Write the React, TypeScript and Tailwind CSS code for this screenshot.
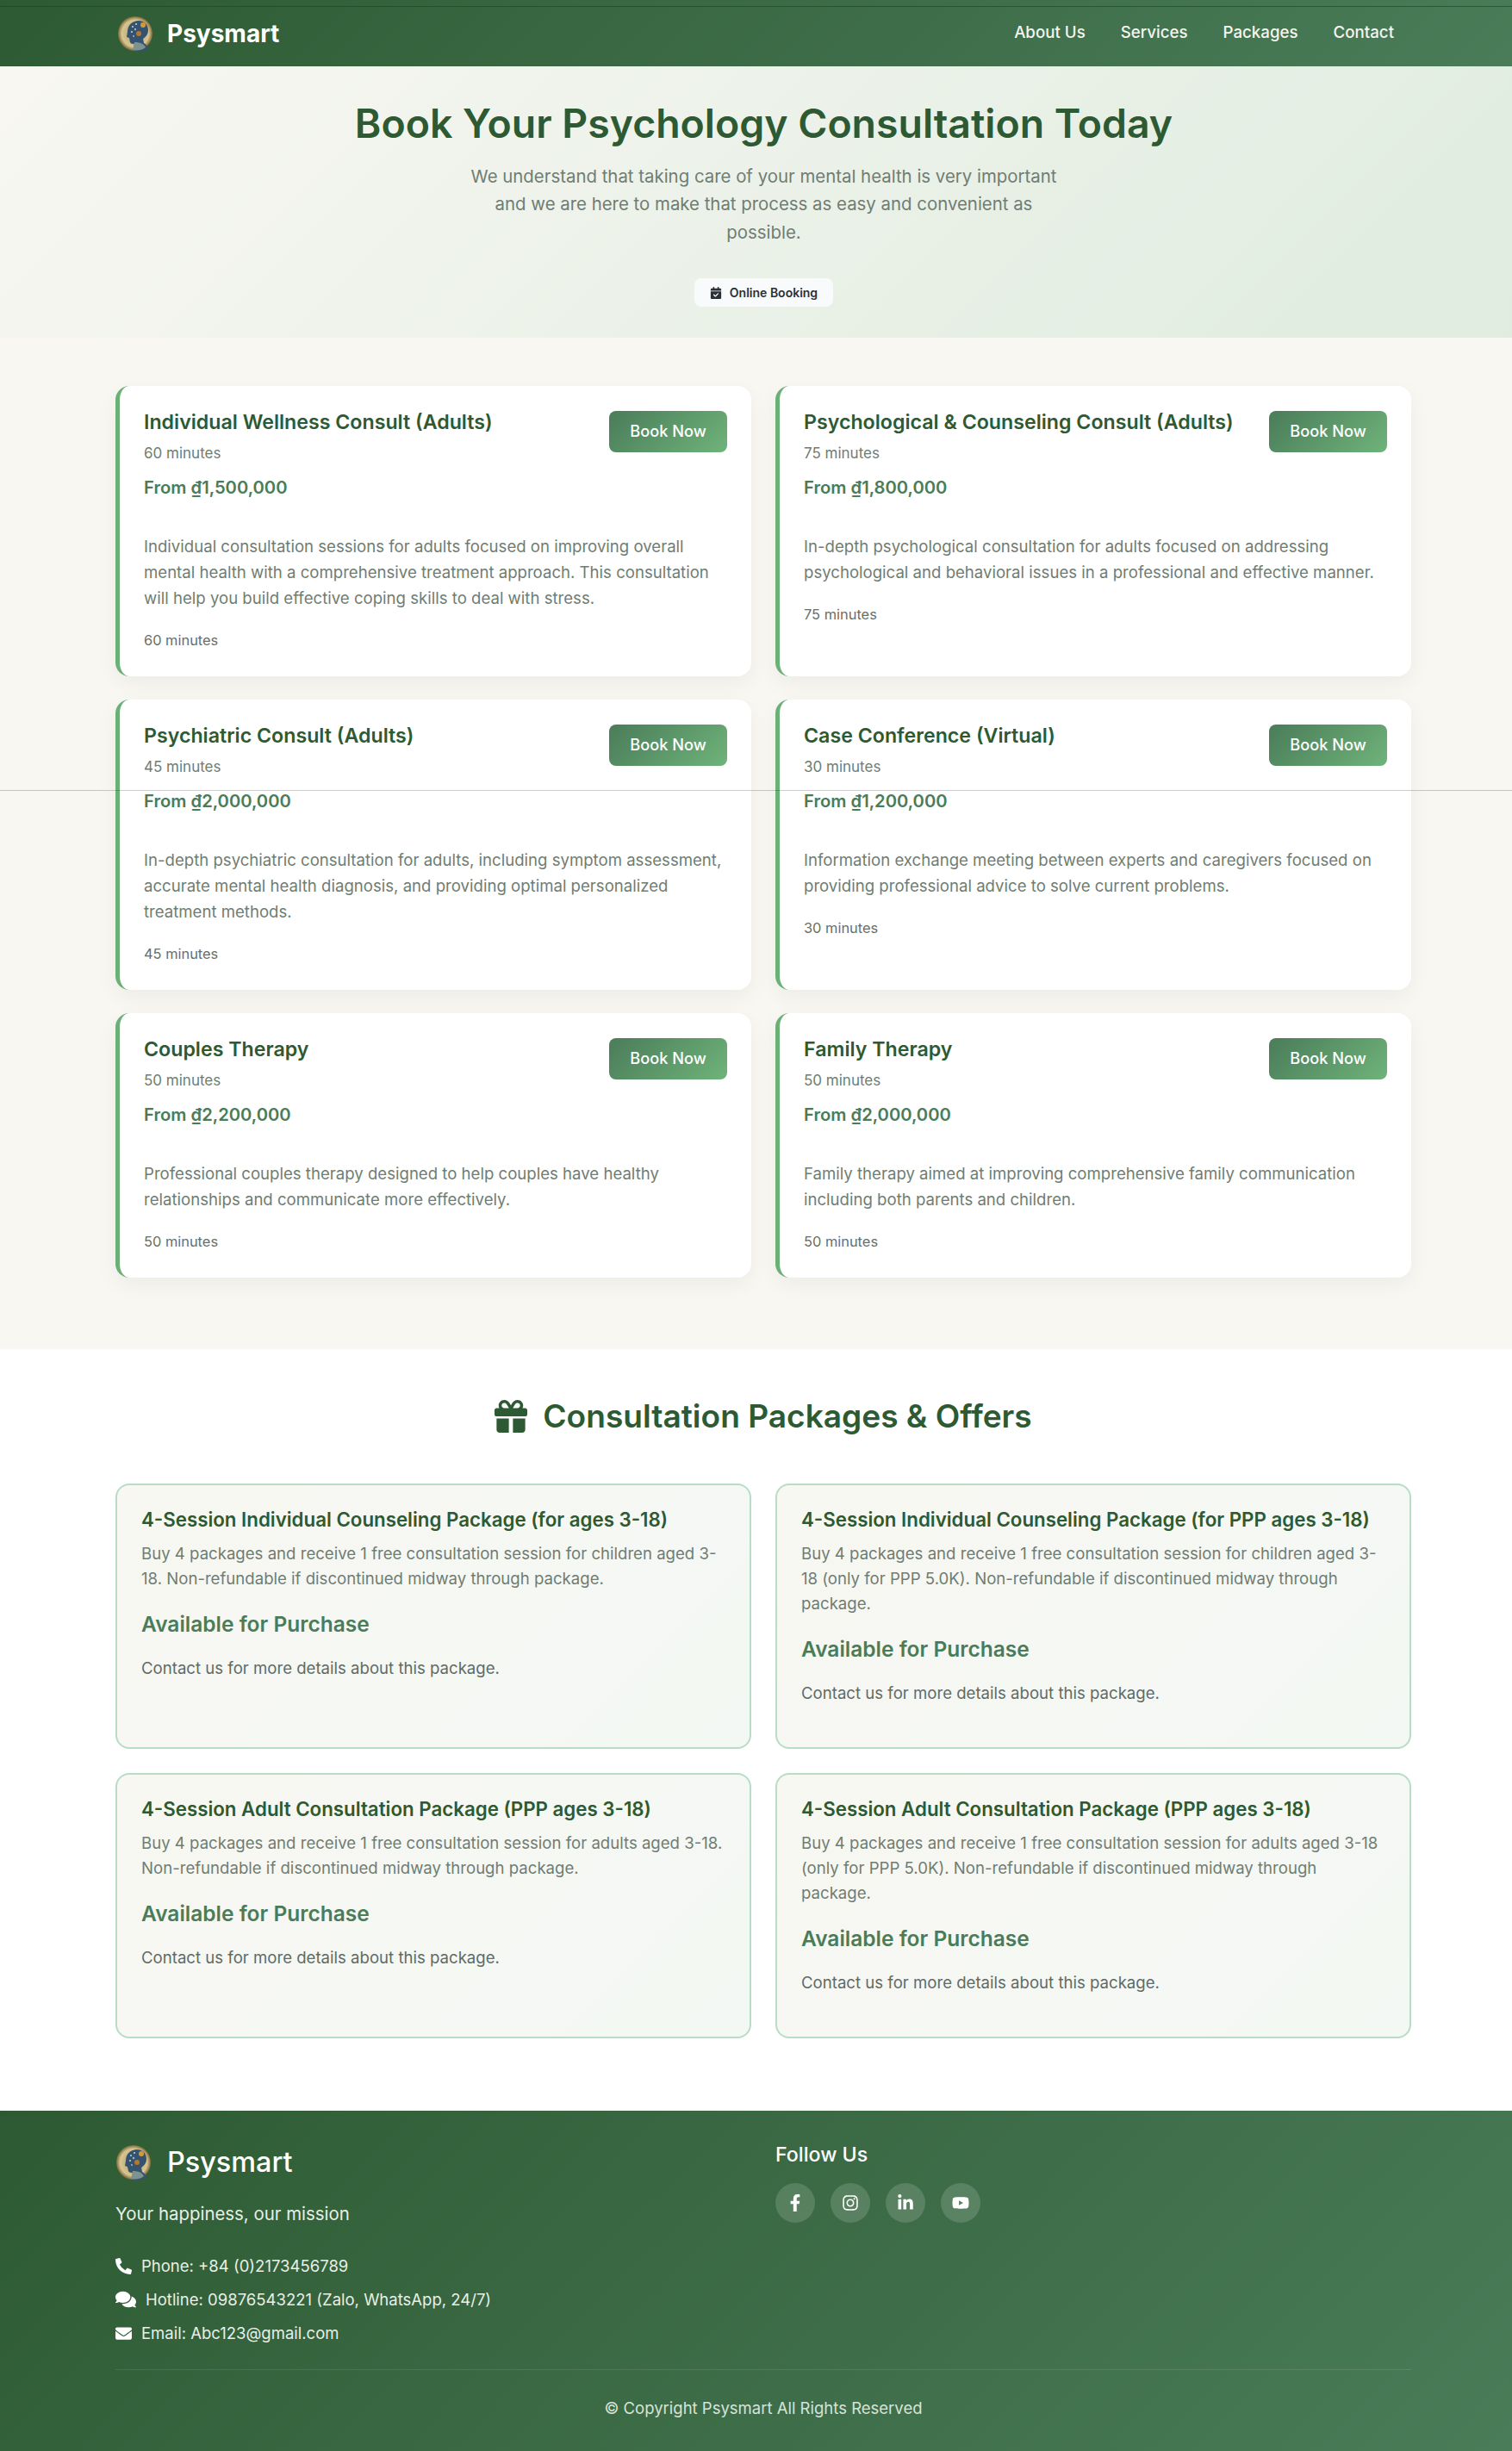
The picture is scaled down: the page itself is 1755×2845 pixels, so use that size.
import { FaComments, FaEnvelope, FaFacebookF, FaInstagram, FaLinkedinIn, FaPhoneAlt, FaYoutube } from "react-icons/fa";
import { FaCalendarCheck, FaGift } from "react-icons/fa6";

const services = [
  {
    title: "Individual Wellness Consult (Adults)",
    minutes: "60 minutes",
    price: "From ₫1,500,000",
    desc: "Individual consultation sessions for adults focused on improving overall mental health with a comprehensive treatment approach. This consultation will help you build effective coping skills to deal with stress.",
  },
  {
    title: "Psychological & Counseling Consult (Adults)",
    minutes: "75 minutes",
    price: "From ₫1,800,000",
    desc: "In-depth psychological consultation for adults focused on addressing psychological and behavioral issues in a professional and effective manner.",
  },
  {
    title: "Psychiatric Consult (Adults)",
    minutes: "45 minutes",
    price: "From ₫2,000,000",
    desc: "In-depth psychiatric consultation for adults, including symptom assessment, accurate mental health diagnosis, and providing optimal personalized treatment methods.",
  },
  {
    title: "Case Conference (Virtual)",
    minutes: "30 minutes",
    price: "From ₫1,200,000",
    desc: "Information exchange meeting between experts and caregivers focused on providing professional advice to solve current problems.",
  },
  {
    title: "Couples Therapy",
    minutes: "50 minutes",
    price: "From ₫2,200,000",
    desc: "Professional couples therapy designed to help couples have healthy relationships and communicate more effectively.",
  },
  {
    title: "Family Therapy",
    minutes: "50 minutes",
    price: "From ₫2,000,000",
    desc: "Family therapy aimed at improving comprehensive family communication including both parents and children.",
  },
];

const packages = [
  {
    title: "4-Session Individual Counseling Package (for ages 3-18)",
    desc: "Buy 4 packages and receive 1 free consultation session for children aged 3-18. Non-refundable if discontinued midway through package.",
  },
  {
    title: "4-Session Individual Counseling Package (for PPP ages 3-18)",
    desc: "Buy 4 packages and receive 1 free consultation session for children aged 3-18 (only for PPP 5.0K). Non-refundable if discontinued midway through package.",
  },
  {
    title: "4-Session Adult Consultation Package (PPP ages 3-18)",
    desc: "Buy 4 packages and receive 1 free consultation session for adults aged 3-18. Non-refundable if discontinued midway through package.",
  },
  {
    title: "4-Session Adult Consultation Package (PPP ages 3-18)",
    desc: "Buy 4 packages and receive 1 free consultation session for adults aged 3-18 (only for PPP 5.0K). Non-refundable if discontinued midway through package.",
  },
];

// no image files here, so the round logo is a small drawing
function Logo({ id }: { id: string }) {
  return (
    <svg viewBox="0 0 42 42" className="h-[42px] w-[42px] shrink-0">
      <defs>
        <radialGradient id={id} cx="50%" cy="50%" r="50%">
          <stop offset="0%" stopColor="#a8986a" />
          <stop offset="78%" stopColor="#d8c690" />
          <stop offset="100%" stopColor="#7d6a3c" />
        </radialGradient>
      </defs>
      <circle cx="21" cy="21" r="20" fill={`url(#${id})`} />
      <path d="M12 19c0-8 6-13 13-13 7 0 11 5 11 11 0 5-3 8-6 10l1 5c2 1 4 3 5 6-4 3-8 4-12 4-2 0-3 0-5-1l1-8c-2 0-4 0-5-2l-1-5-3-1z" fill="#35526f" />
      <path d="M20 31l-2 9c4 1 10 1 15-3-2-4-6-6-13-6z" fill="#7b9490" />
      <circle cx="30" cy="11" r="3" fill="#d49a3a" />
      <circle cx="25" cy="21" r="3" fill="#b8752c" />
      <circle cx="18" cy="13" r="1" fill="#c8d8e0" />
      <circle cx="22" cy="10" r="1" fill="#c8d8e0" />
      <circle cx="17" cy="19" r="1" fill="#c8d8e0" />
      <circle cx="21" cy="16" r="1.2" fill="#9ab8cc" />
      <circle cx="19" cy="24" r="1" fill="#9ab8cc" />
    </svg>
  );
}

function ServiceCard({ item }: { item: (typeof services)[number] }) {
  return (
    <div className="rounded-2xl border-l-[5px] border-[#6bb077] bg-white pt-[26px] pr-[28px] pb-[29px] pl-[28px] shadow-[0_8px_24px_rgba(0,0,0,0.05)]">
      <div className="flex items-start justify-between">
        <div>
          <h3 className="text-[23.2px] leading-[32px] font-semibold text-[#2d5a32]">{item.title}</h3>
          <p className="mt-[8px] text-[17px] leading-[24px] text-[#6f7d73]">{item.minutes}</p>
          <p className="mt-[12px] text-[20.2px] leading-[32px] font-semibold text-[#4a7c59]">{item.price}</p>
        </div>
        <button className="mt-[3px] h-[48px] w-[137px] shrink-0 rounded-lg bg-[linear-gradient(135deg,#4a7c59,#6fb37a)] text-[18.2px] font-medium text-white">
          Book Now
        </button>
      </div>
      <p className="mt-[37px] text-[18.6px] leading-[30px] text-[#6f7d73]">{item.desc}</p>
      <p className="mt-[21px] text-[16.4px] leading-[26px] text-[#666f6a]">{item.minutes}</p>
    </div>
  );
}

function PackageCard({ item }: { item: (typeof packages)[number] }) {
  return (
    <div className="rounded-2xl border-2 border-[#b8dcc6] bg-[linear-gradient(135deg,#f8f7f2,#f3f8f4)] px-[28px] pt-[25px] pb-[48px]">
      <h3 className="text-[22.3px] leading-[30px] font-semibold text-[#2d5a32]">{item.title}</h3>
      <p className="mt-[10px] text-[18.6px] leading-[29px] text-[#6f7d73]">{item.desc}</p>
      <p className="mt-[20px] text-[24.5px] leading-[36px] font-semibold text-[#4a7c59]">Available for Purchase</p>
      <p className="mt-[19px] text-[18.6px] leading-[29px] text-[#5f6b66]">Contact us for more details about this package.</p>
    </div>
  );
}

export default function App() {
  return (
    <div className="relative w-full overflow-hidden bg-white font-['Inter',sans-serif]">
      {/* stray hairlines in the capture */}
      <div className="absolute top-[7px] left-0 h-px w-full bg-[#1f3f24]/60" />
      <div className="absolute top-[917px] left-0 z-10 h-px w-full bg-black/20" />

      <nav className="flex h-[77px] items-center justify-between bg-[linear-gradient(135deg,#2d5a32,#4a7c59)] pr-[137px] pl-[136px]">
        <div className="flex items-center gap-[16px]">
          <Logo id="logo-nav" />
          <span className="text-[28px] font-bold text-white">Psysmart</span>
        </div>
        <div className="flex items-center gap-[41px] text-[18.7px] font-medium text-[#f5f5ef]">
          <a>About Us</a>
          <a>Services</a>
          <a>Packages</a>
          <a>Contact</a>
        </div>
      </nav>

      <header className="h-[315px] bg-[linear-gradient(135deg,#f8f7f2,#dfecdf)] pt-[35px] pl-[18px] text-center">
        <h1 className="text-[46.4px] leading-[62px] font-semibold text-[#2d5a32]">Book Your Psychology Consultation Today</h1>
        <p className="mx-auto mt-[15px] max-w-[690px] text-[20.4px] leading-[32.4px] text-[#6f7d73]">
          We understand that taking care of your mental health is very important and we are here to make that process as easy and convenient as possible.
        </p>
        <div className="mt-[37px] inline-flex h-[33px] items-center gap-[9px] rounded-lg bg-[#f9fafb] px-[18px] text-[14px] font-semibold text-[#2b2f36]">
          <FaCalendarCheck className="text-[14px]" />
          Online Booking
        </div>
      </header>

      <section className="bg-[#f8f7f2] pt-[56px] pr-[117px] pb-[83px] pl-[134px]">
        <div className="grid grid-cols-2 gap-x-[28px] gap-y-[27px]">
          {services.map((s) => (
            <ServiceCard key={s.title} item={s} />
          ))}
        </div>
      </section>

      <section className="bg-white pt-[52px] pr-[117px] pb-[84px] pl-[134px]">
        <h2 className="flex items-center justify-center gap-[18px] text-[37.1px] leading-[52px] font-semibold text-[#2d5a32]">
          <FaGift className="text-[38px]" />
          Consultation Packages & Offers
        </h2>
        <div className="mt-[52px] grid grid-cols-2 gap-x-[28px] gap-y-[28px]">
          {packages.map((p, i) => (
            <PackageCard key={i} item={p} />
          ))}
        </div>
      </section>

      <footer className="bg-[linear-gradient(135deg,#2d5a32,#4a7c59)] pt-[36px] pr-[117px] pb-[35px] pl-[134px] text-[#e8efe6]">
        <div className="grid grid-cols-2 gap-x-[28px]">
          <div>
            <div className="flex items-center gap-[18px]">
              <Logo id="logo-footer" />
              <span className="text-[32.4px] leading-[48px] font-medium text-white">Psysmart</span>
            </div>
            <p className="mt-[21px] text-[20.4px] leading-[30px]">Your happiness, our mission</p>
            <ul className="mt-[30px] flex flex-col gap-[9px] text-[18.5px] leading-[30px]">
              <li className="flex items-center gap-[11px]">
                <FaPhoneAlt className="text-[19px] text-white" />
                Phone: +84 (0)2173456789
              </li>
              <li className="flex items-center gap-[11px]">
                <FaComments className="text-[24px] text-white" />
                Hotline: 09876543221 (Zalo, WhatsApp, 24/7)
              </li>
              <li className="flex items-center gap-[11px]">
                <FaEnvelope className="text-[19px] text-white" />
                Email: Abc123@gmail.com
              </li>
            </ul>
          </div>
          <div>
            <h4 className="text-[23.2px] leading-[30px] font-medium text-white">Follow Us</h4>
            <div className="mt-[18px] flex gap-[18px]">
              {[FaFacebookF, FaInstagram, FaLinkedinIn, FaYoutube].map((Icon, i) => (
                <span key={i} className="flex h-[46px] w-[46px] items-center justify-center rounded-full bg-white/15 text-[20px] text-white">
                  <Icon />
                </span>
              ))}
            </div>
          </div>
        </div>
        <div className="mt-[27px] border-t border-white/10 pt-[29px] text-center text-[18.5px] leading-[30px] text-[#d8e3d8]">
          © Copyright Psysmart All Rights Reserved
        </div>
      </footer>
    </div>
  );
}
